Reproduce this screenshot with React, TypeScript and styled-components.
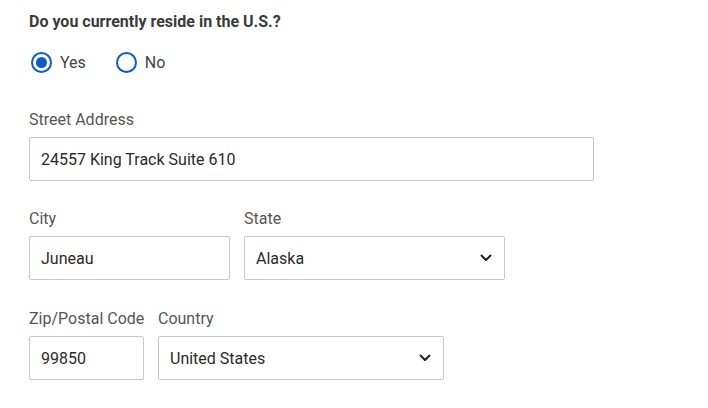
import React, { useState } from "react";
import styled, { createGlobalStyle } from "styled-components";

const Global = createGlobalStyle`
  html, body { margin: 0; padding: 0; background: #fff; }
  body { font-family: Roboto, "Liberation Sans", Arial, sans-serif; }
  * { box-sizing: border-box; }
`;

const Form = styled.form`
  display: flex;
  flex-direction: column;
  padding: 12px 0 0 29px;
  width: 708px;
`;

const Question = styled.div`
  font-size: 16px;
  font-weight: 700;
  line-height: 20px;
  color: #3a3a3a;
`;

const RadioRow = styled.div`
  display: flex;
  align-items: center;
  gap: 30px;
  margin-top: 20px;
  margin-left: 2px;
  height: 21px;
`;

const RadioLabel = styled.label`
  display: flex;
  align-items: center;
  gap: 8px;
  font-size: 16px;
  color: #444;
  cursor: pointer;
`;

const RadioCircle = styled.span<{ $checked: boolean }>`
  width: 21px;
  height: 21px;
  border-radius: 50%;
  border: 2px solid #0a5ccc;
  display: flex;
  align-items: center;
  justify-content: center;
  &::after {
    content: "";
    width: 11px;
    height: 11px;
    border-radius: 50%;
    background: #0a5ccc;
    display: ${(p) => (p.$checked ? "block" : "none")};
  }
`;

const Row = styled.div<{ $top: number }>`
  display: flex;
  gap: 14px;
  margin-top: ${(p) => p.$top}px;
`;

const Field = styled.div<{ $w: number }>`
  display: flex;
  flex-direction: column;
  gap: 7px;
  width: ${(p) => p.$w}px;
`;

const Label = styled.div`
  font-size: 16px;
  line-height: 20px;
  color: #555;
  white-space: nowrap;
`;

const Box = styled.div`
  height: 44px;
  border: 1px solid #c8c8c8;
  border-radius: 2px;
  display: flex;
  align-items: center;
  justify-content: space-between;
  padding: 0 12px 0 11px;
  font-size: 16px;
  color: #2a2a2a;
`;

const Chevron = () => (
  <svg width="12" height="8" viewBox="0 0 12 8" fill="none">
    <path d="M1.5 1.5 L6 6 L10.5 1.5" stroke="#222" strokeWidth="2" strokeLinecap="round" strokeLinejoin="round" />
  </svg>
);

export default function App() {
  const [us, setUs] = useState(true);
  return (
    <>
      <Global />
      <Form>
        <Question>Do you currently reside in the U.S.?</Question>
        <RadioRow>
          <RadioLabel onClick={() => setUs(true)}>
            <RadioCircle $checked={us} />
            Yes
          </RadioLabel>
          <RadioLabel onClick={() => setUs(false)}>
            <RadioCircle $checked={!us} />
            No
          </RadioLabel>
        </RadioRow>
        <Row $top={37}>
          <Field $w={565}>
            <Label>Street Address</Label>
            <Box>24557 King Track Suite 610</Box>
          </Field>
        </Row>
        <Row $top={28}>
          <Field $w={201}>
            <Label>City</Label>
            <Box>Juneau</Box>
          </Field>
          <Field $w={261}>
            <Label>State</Label>
            <Box>
              Alaska
              <Chevron />
            </Box>
          </Field>
        </Row>
        <Row $top={29}>
          <Field $w={115}>
            <Label>Zip/Postal Code</Label>
            <Box>99850</Box>
          </Field>
          <Field $w={286}>
            <Label>Country</Label>
            <Box>
              United States
              <Chevron />
            </Box>
          </Field>
        </Row>
      </Form>
    </>
  );
}
